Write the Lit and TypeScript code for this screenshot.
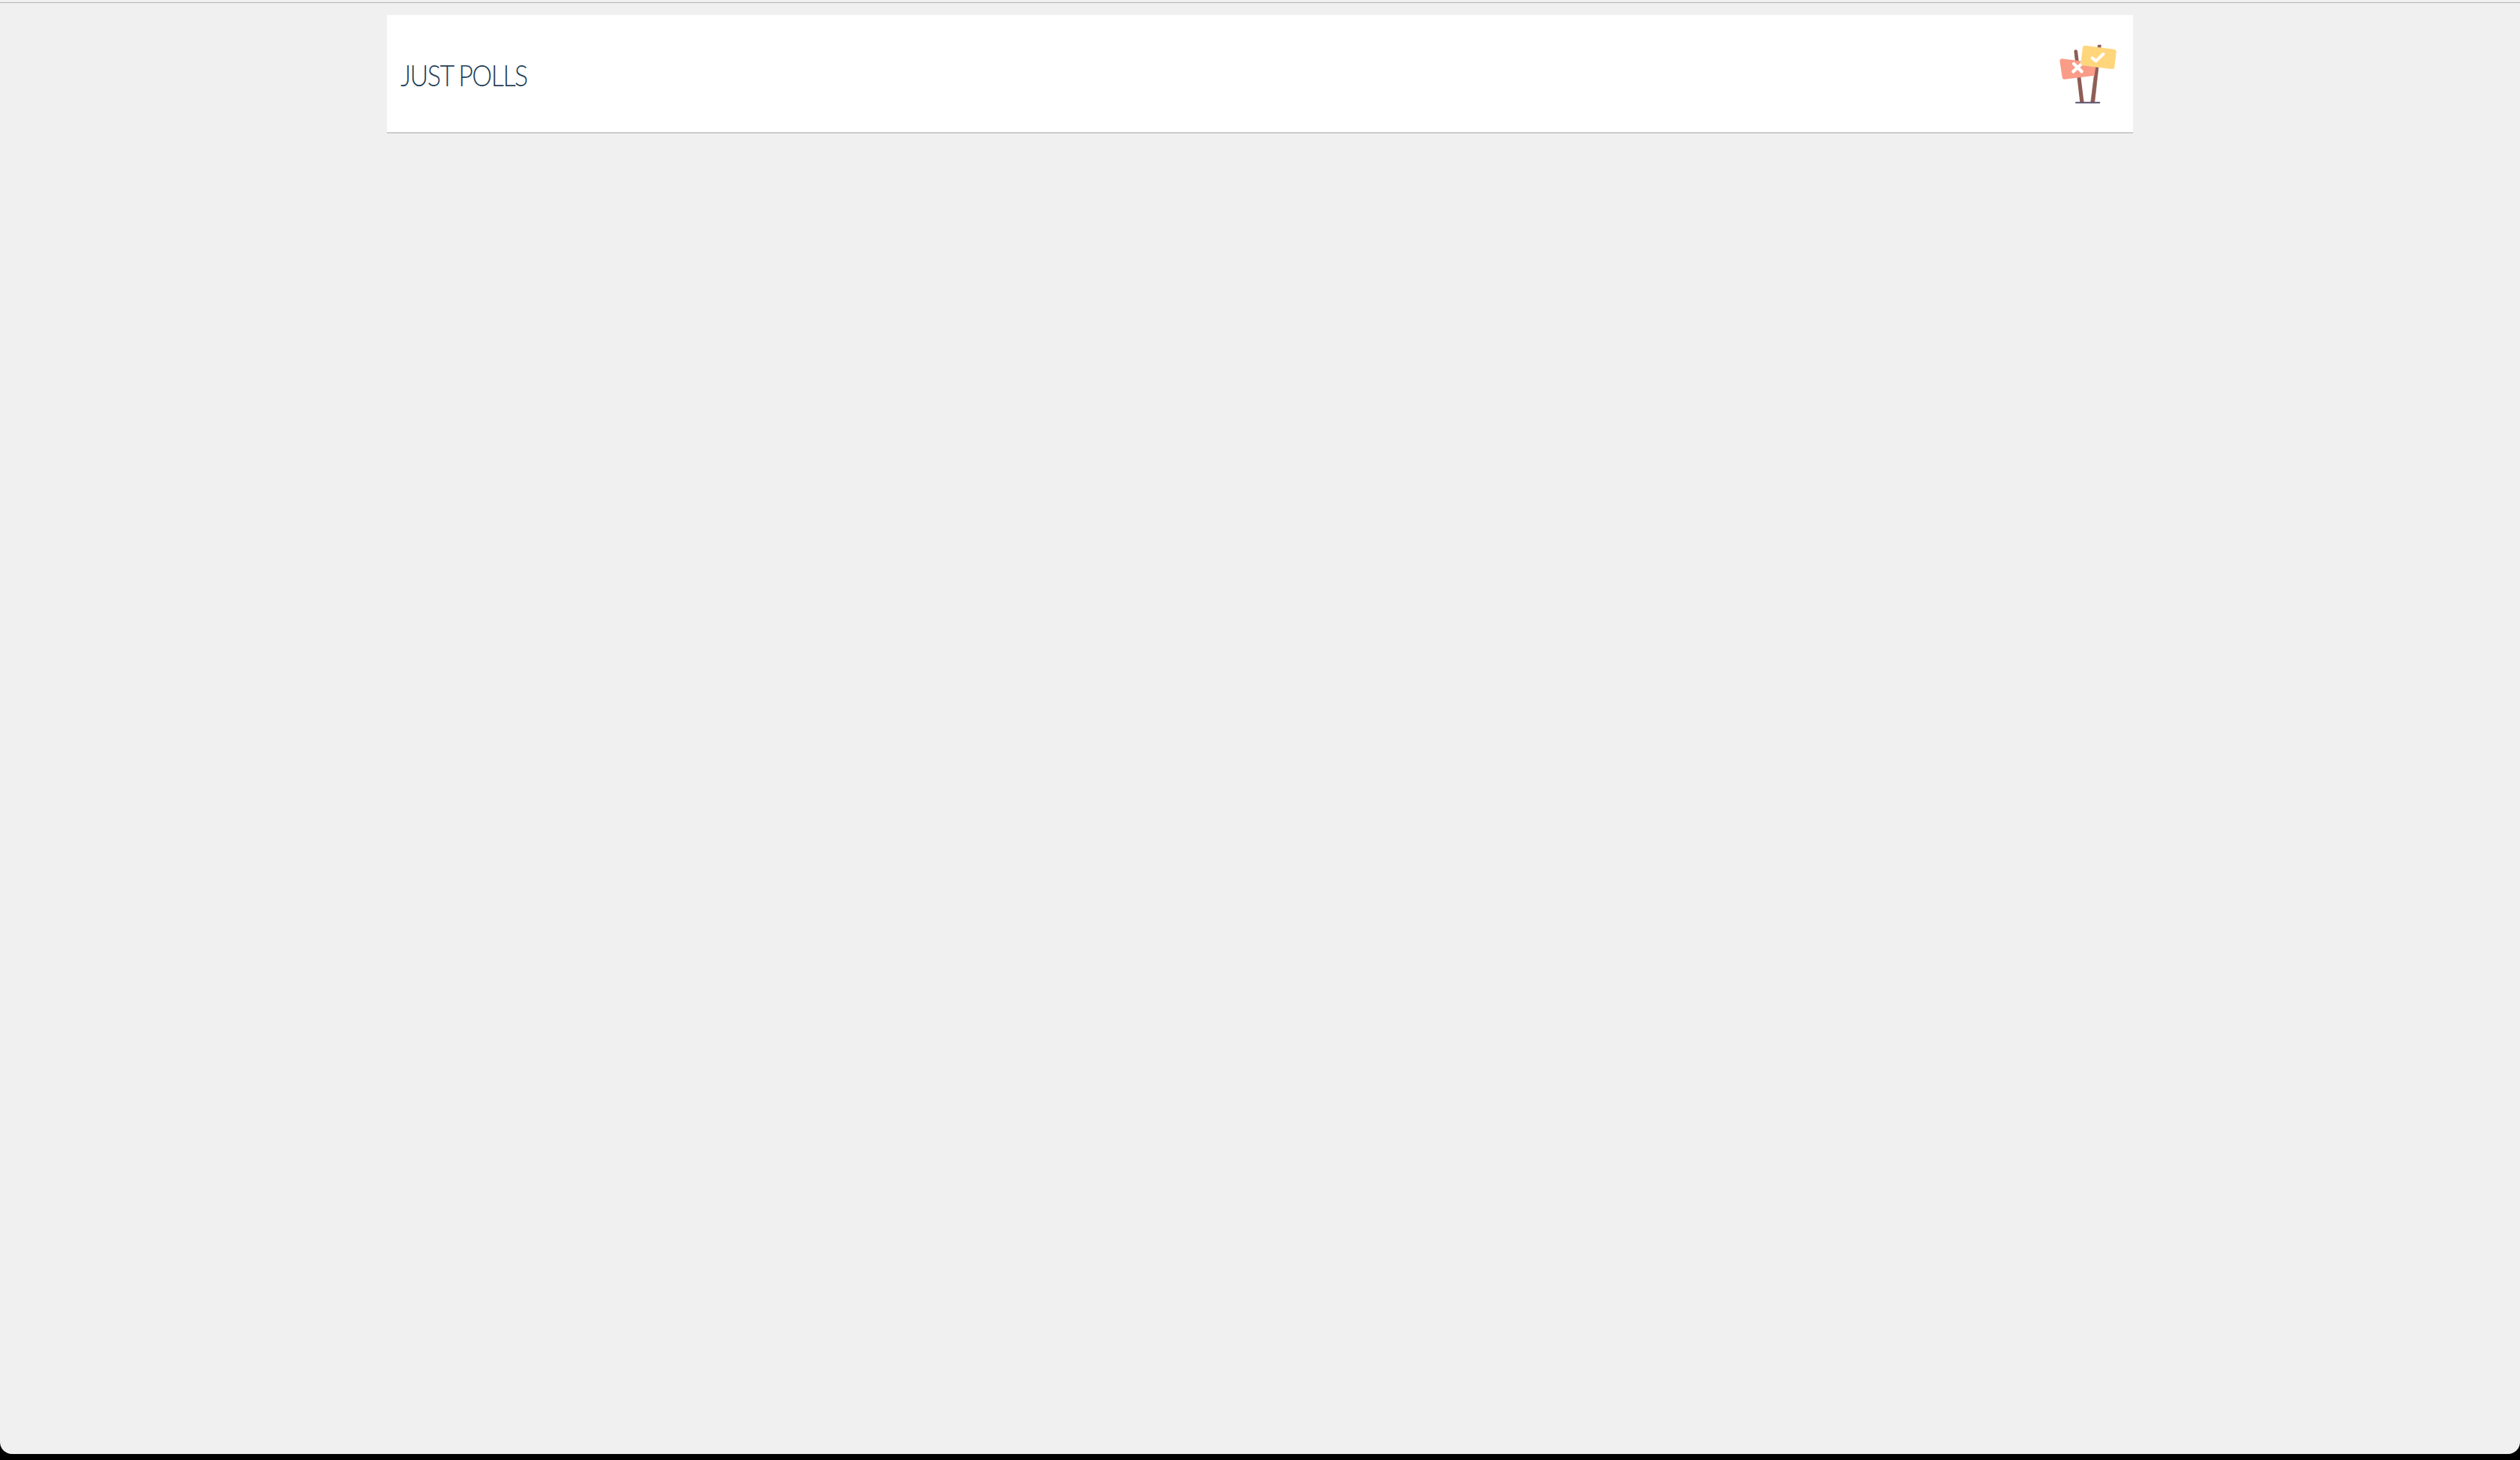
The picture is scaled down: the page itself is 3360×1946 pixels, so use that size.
import { LitElement, html, css } from "lit";
import { customElement } from "lit/decorators.js";

@customElement("app-root")
export class AppRoot extends LitElement {
  static styles = css`
    :host {
      display: block;
      height: 1946px;
      background: #000;
      overflow: hidden;
    }
    .window {
      box-sizing: border-box;
      height: 1938px;
      padding-top: 3px;
      background: #f0f0f0;
      border-radius: 0 0 16px 16px;
      overflow: hidden;
    }
    .rule {
      height: 1px;
      background: #b4b4b4;
    }
    .page {
      width: 2328px;
      margin: 16px auto 0;
    }
    .header {
      box-sizing: border-box;
      height: 158px;
      display: flex;
      align-items: center;
      justify-content: space-between;
      padding: 0 20px;
      background: #fff;
      border-bottom: 2px solid #ccc;
    }
    .title {
      margin: 0 0 0 -2px;
      font-family: Lato, "Liberation Sans", sans-serif;
      font-weight: 300;
      font-size: 40px;
      line-height: 1;
      letter-spacing: -1.8px;
      color: #243f57;
      position: relative;
      top: 2px;
      transform: scaleX(0.85);
      transform-origin: left center;
    }
    .logo {
      display: block;
      width: 80px;
      height: 80px;
    }
  `;

  render() {
    return html`
      <div class="window">
        <div class="rule"></div>
        <div class="page">
          <header class="header">
            <h1 class="title">JUST POLLS</h1>
            <svg class="logo" viewBox="72 54 240 240" aria-hidden="true">
              <path d="M232 60 L244 60 L218 290 L203 290 Z" fill="#8f5d55" stroke="#8f5d55" stroke-width="2" stroke-linejoin="round"/>
              <path d="M136 84 Q143 72 150 84 L176 290 L160 290 Z" fill="#8f5d55"/>
              <path d="M88 115 L225 131 L218 182 L98 197 Q90 198 89 190 L79 124 Q79 116 88 115 Z" fill="#fa9c88"/>
              <path d="M160 126 L172 112 L172 142 Z" fill="#e3e6ee"/>
              <path d="M135 135 L167 166 M133 166 L167 135" stroke="#fff" stroke-width="13" stroke-linecap="round" fill="none"/>
              <path d="M180 62 L296 77 Q306 79 305 88 L298 149 Q297 158 287 156 L171 142 Q162 140 163 132 L171 70 Q172 61 180 62 Z" fill="#ffd67c"/>
              <path d="M209 112 L224 124 L253 96" stroke="#fff" stroke-width="12" stroke-linecap="round" stroke-linejoin="round" fill="none"/>
              <path d="M144 290 L238 290" stroke="#5a5170" stroke-width="6" stroke-linecap="round"/>
            </svg>
          </header>
        </div>
      </div>
    `;
  }
}
